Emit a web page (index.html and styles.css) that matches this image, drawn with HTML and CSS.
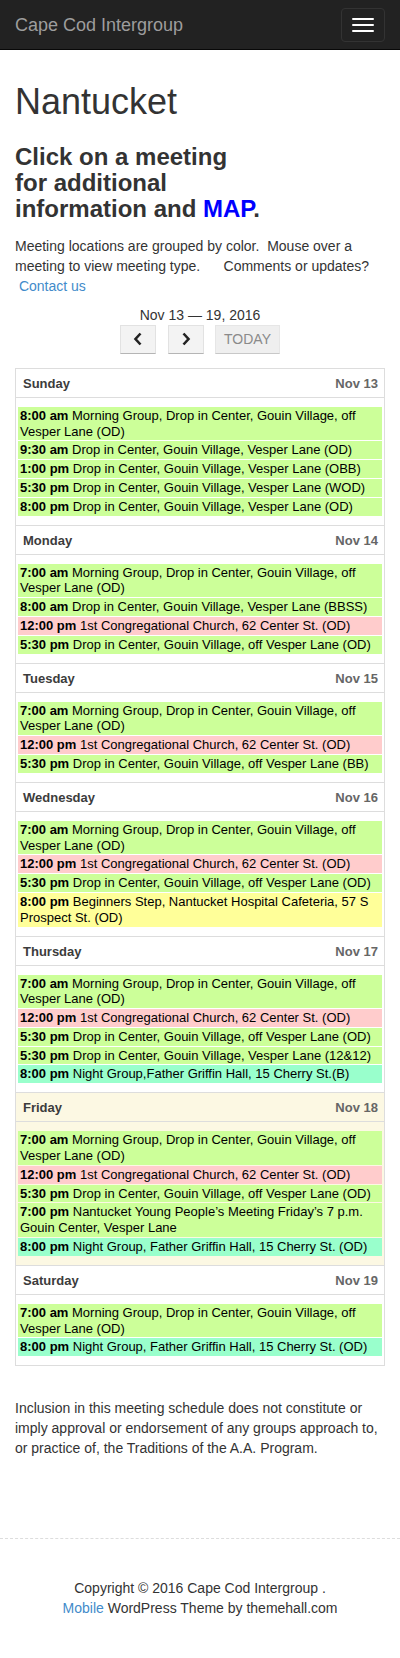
FILE: index.html
```html
<!DOCTYPE html>
<html lang="en">
<head>
<meta charset="utf-8">
<title>Nantucket | Cape Cod Intergroup</title>
<link rel="stylesheet" href="styles.css">
</head>
<body>
<header class="navbar">
  <a class="brand" href="#">Cape Cod Intergroup</a>
  <button class="toggle" type="button" aria-label="Toggle navigation">
    <span class="bar"></span><span class="bar"></span><span class="bar"></span>
  </button>
</header>

<main class="content">
  <h1 class="page-title">Nantucket</h1>
  <h3 class="lead">Click on a meeting<br>for additional<br>information and <span class="map">MAP</span>.</h3>
  <p class="intro">Meeting locations are grouped by color.&nbsp; Mouse over a meeting to view meeting type.&nbsp;&nbsp;&nbsp;&nbsp;&nbsp; Comments or updates? &nbsp;<a href="#">Contact us</a></p>

  <div class="toolbar">
    <div class="range">Nov 13 — 19, 2016</div>
    <div class="buttons">
      <button class="fc-btn arrow" type="button" aria-label="prev"><svg width="10" height="14" viewBox="0 0 10 14"><path d="M7.5 1.5 L2.5 7 L7.5 12.5" fill="none" stroke="#222" stroke-width="2.6"/></svg></button>
      <button class="fc-btn arrow" type="button" aria-label="next"><svg width="10" height="14" viewBox="0 0 10 14"><path d="M2.5 1.5 L7.5 7 L2.5 12.5" fill="none" stroke="#222" stroke-width="2.6"/></svg></button>
      <button class="fc-btn today" type="button">TODAY</button>
    </div>
  </div>

  <div class="calendar">
    <section class="day">
      <div class="day-head"><span class="dname">Sunday</span><span class="ddate">Nov 13</span></div>
      <div class="events">
        <div class="ev green"><b>8:00 am</b> Morning Group, Drop in Center, Gouin Village, off Vesper Lane (OD)</div>
        <div class="ev green"><b>9:30 am</b> Drop in Center, Gouin Village, Vesper Lane (OD)</div>
        <div class="ev green"><b>1:00 pm</b> Drop in Center, Gouin Village, Vesper Lane (OBB)</div>
        <div class="ev green"><b>5:30 pm</b> Drop in Center, Gouin Village, Vesper Lane (WOD)</div>
        <div class="ev green"><b>8:00 pm</b> Drop in Center, Gouin Village, Vesper Lane (OD)</div>
      </div>
    </section>
    <section class="day">
      <div class="day-head"><span class="dname">Monday</span><span class="ddate">Nov 14</span></div>
      <div class="events">
        <div class="ev green"><b>7:00 am</b> Morning Group, Drop in Center, Gouin Village, off Vesper Lane (OD)</div>
        <div class="ev green"><b>8:00 am</b> Drop in Center, Gouin Village, Vesper Lane (BBSS)</div>
        <div class="ev pink"><b>12:00 pm</b> 1st Congregational Church, 62 Center St. (OD)</div>
        <div class="ev green"><b>5:30 pm</b> Drop in Center, Gouin Village, off Vesper Lane (OD)</div>
      </div>
    </section>
    <section class="day">
      <div class="day-head"><span class="dname">Tuesday</span><span class="ddate">Nov 15</span></div>
      <div class="events">
        <div class="ev green"><b>7:00 am</b> Morning Group, Drop in Center, Gouin Village, off Vesper Lane (OD)</div>
        <div class="ev pink"><b>12:00 pm</b> 1st Congregational Church, 62 Center St. (OD)</div>
        <div class="ev green"><b>5:30 pm</b> Drop in Center, Gouin Village, off Vesper Lane (BB)</div>
      </div>
    </section>
    <section class="day">
      <div class="day-head"><span class="dname">Wednesday</span><span class="ddate">Nov 16</span></div>
      <div class="events">
        <div class="ev green"><b>7:00 am</b> Morning Group, Drop in Center, Gouin Village, off Vesper Lane (OD)</div>
        <div class="ev pink"><b>12:00 pm</b> 1st Congregational Church, 62 Center St. (OD)</div>
        <div class="ev green"><b>5:30 pm</b> Drop in Center, Gouin Village, off Vesper Lane (OD)</div>
        <div class="ev yellow"><b>8:00 pm</b> Beginners Step, Nantucket Hospital Cafeteria, 57 S Prospect St. (OD)</div>
      </div>
    </section>
    <section class="day">
      <div class="day-head"><span class="dname">Thursday</span><span class="ddate">Nov 17</span></div>
      <div class="events">
        <div class="ev green"><b>7:00 am</b> Morning Group, Drop in Center, Gouin Village, off Vesper Lane (OD)</div>
        <div class="ev pink"><b>12:00 pm</b> 1st Congregational Church, 62 Center St. (OD)</div>
        <div class="ev green"><b>5:30 pm</b> Drop in Center, Gouin Village, off Vesper Lane (OD)</div>
        <div class="ev green"><b>5:30 pm</b> Drop in Center, Gouin Village, Vesper Lane (12&amp;12)</div>
        <div class="ev mint"><b>8:00 pm</b> Night Group,Father Griffin Hall, 15 Cherry St.(B)</div>
      </div>
    </section>
    <section class="day today">
      <div class="day-head"><span class="dname">Friday</span><span class="ddate">Nov 18</span></div>
      <div class="events">
        <div class="ev green"><b>7:00 am</b> Morning Group, Drop in Center, Gouin Village, off Vesper Lane (OD)</div>
        <div class="ev pink"><b>12:00 pm</b> 1st Congregational Church, 62 Center St. (OD)</div>
        <div class="ev green"><b>5:30 pm</b> Drop in Center, Gouin Village, off Vesper Lane (OD)</div>
        <div class="ev green"><b>7:00 pm</b> Nantucket Young People’s Meeting Friday’s 7 p.m. Gouin Center, Vesper Lane</div>
        <div class="ev mint"><b>8:00 pm</b> Night Group, Father Griffin Hall, 15 Cherry St. (OD)</div>
      </div>
    </section>
    <section class="day">
      <div class="day-head"><span class="dname">Saturday</span><span class="ddate">Nov 19</span></div>
      <div class="events">
        <div class="ev green"><b>7:00 am</b> Morning Group, Drop in Center, Gouin Village, off Vesper Lane (OD)</div>
        <div class="ev mint"><b>8:00 pm</b> Night Group, Father Griffin Hall, 15 Cherry St. (OD)</div>
      </div>
    </section>
  </div>

  <p class="disclaimer">Inclusion in this meeting schedule does not constitute or imply approval or endorsement of any groups approach to, or practice of, the Traditions of the A.A. Program.</p>
</main>

<footer class="footer">
  <p>Copyright © 2016 Cape Cod Intergroup .<br><a href="#">Mobile</a> WordPress Theme by themehall.com</p>
</footer>
</body>
</html>
```

FILE: styles.css
```css
* { box-sizing: border-box; }

html, body {
  margin: 0;
  padding: 0;
}

body {
  background: #fff;
  color: #333;
  font-family: "Liberation Sans", Arial, sans-serif;
  font-size: 14px;
  line-height: 20px;
}

a { color: #428bca; text-decoration: none; }

/* Navbar */
.navbar {
  height: 50px;
  background: #222;
  border-bottom: 1px solid #080808;
  display: flex;
  align-items: flex-start;
  justify-content: space-between;
  padding: 0 15px;
}
.brand {
  color: #9d9d9d;
  font-size: 18px;
  line-height: 20px;
  padding: 15px 0;
}
.toggle {
  margin-top: 8px;
  width: 44px;
  height: 34px;
  border: 1px solid #333;
  border-radius: 4px;
  background: transparent;
  padding: 0 10px;
  display: flex;
  flex-direction: column;
  justify-content: center;
  align-items: center;
  gap: 4px;
}
.bar {
  display: block;
  width: 22px;
  height: 2px;
  background: #fff;
  border-radius: 1px;
}

/* Content */
.content {
  padding: 0 15px;
}
.page-title {
  margin: 32px 0 0;
  font-size: 36px;
  line-height: 1.1;
  font-weight: 400;
  color: #333;
}
.lead {
  margin: 22px 0 13px;
  font-size: 24px;
  line-height: 1.1;
  font-weight: 700;
  color: #333;
}
.map { color: #0000ff; }
.intro {
  margin: 0 0 9px;
}

/* Toolbar */
.toolbar {
  display: flex;
  flex-direction: column;
  align-items: center;
  margin-bottom: 14px;
}
.range {
  font-size: 14px;
  line-height: 20px;
  color: #333;
}
.buttons {
  display: flex;
  gap: 11.5px;
}
.fc-btn {
  height: 29px;
  margin: 0;
  padding: 0 8px;
  background: #f3f3f3;
  border: 1px solid #e2e2e2;
  border-bottom-color: #b5b5b5;
  border-radius: 0;
  font-family: "Liberation Sans", Arial, sans-serif;
  font-size: 14px;
  color: #333;
  display: flex;
  align-items: center;
  justify-content: center;
}
.fc-btn.arrow { width: 36px; }
.fc-btn.today {
  width: 65px;
  color: #8a8a8a;
  background: #efefef;
  border-color: #e6e6e6;
  border-bottom-color: #c8c8c8;
}

/* Calendar */
.calendar {
  border: 1px solid #ddd;
  border-top: 0;
}
.day {
  border-top: 1px solid #ddd;
}
.day.today {
  background: #fcf8e3;
}
.day-head {
  display: flex;
  justify-content: space-between;
  padding: 7px 6px 5px 7px;
  line-height: 16px;
  font-size: 13px;
  font-weight: 700;
  border-bottom: 1px solid #ddd;
}
.dname { color: #3c3c3c; }
.ddate { color: #666; }
.events {
  display: flex;
  flex-direction: column;
  gap: 1px;
  padding: 9px 2px;
}
.ev {
  padding: 1px 2px;
  font-size: 13px;
  line-height: 15.8px;
  color: #000;
}
.ev b { font-weight: 700; }
.green { background: #ccff99; }
.pink { background: #ffcccc; }
.yellow { background: #ffff99; }
.mint { background: #99ffcc; }

.disclaimer {
  margin: 32px 0 0;
  padding-bottom: 80px;
}

/* Footer */
.footer {
  border-top: 1px dashed #ddd;
  padding: 39px 15px 40px;
  text-align: center;
}
.footer p { margin: 0; }
```
